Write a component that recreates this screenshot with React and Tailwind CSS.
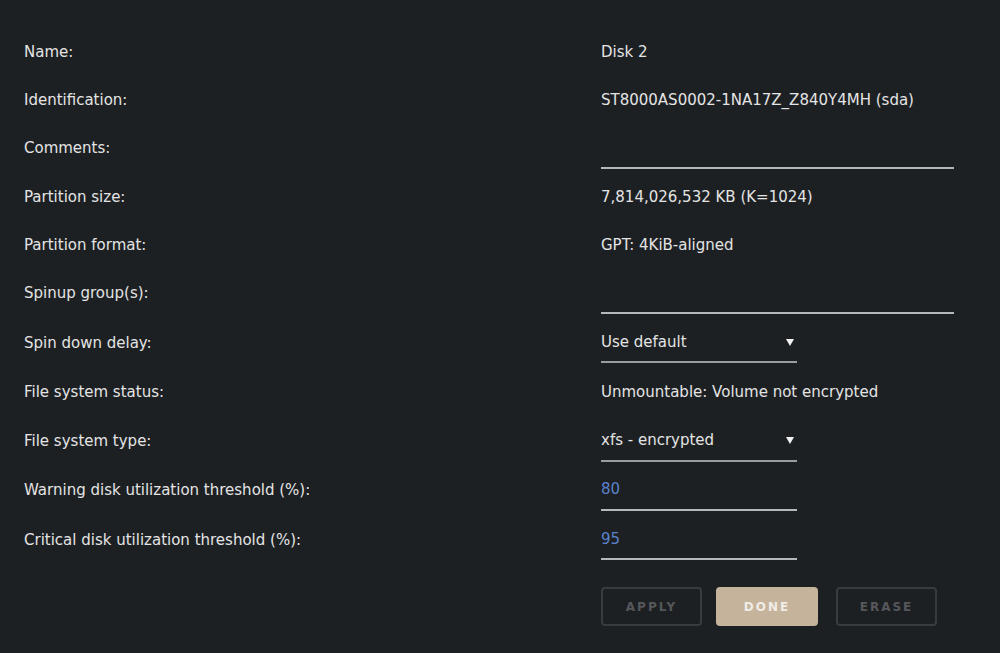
import React from 'react'

const rows = [
  { label: 'Name:', h: 'h-[47px]', type: 'text', value: 'Disk 2' },
  { label: 'Identification:', h: 'h-[48px]', type: 'text', value: 'ST8000AS0002-1NA17Z_Z840Y4MH (sda)' },
  { label: 'Comments:', h: 'h-[49px]', type: 'input', value: '', wide: true },
  { label: 'Partition size:', h: 'h-[49px]', type: 'text', value: '7,814,026,532 KB (K=1024)' },
  { label: 'Partition format:', h: 'h-[47px]', type: 'text', value: 'GPT: 4KiB-aligned' },
  { label: 'Spinup group(s):', h: 'h-[49px]', type: 'input', value: '', wide: true },
  { label: 'Spin down delay:', h: 'h-[50px]', type: 'select', value: 'Use default' },
  { label: 'File system status:', h: 'h-[49px]', type: 'text', value: 'Unmountable: Volume not encrypted' },
  { label: 'File system type:', h: 'h-[49px]', type: 'select', value: 'xfs - encrypted' },
  { label: 'Warning disk utilization threshold (%):', h: 'h-[49px]', type: 'number', value: '80' },
  { label: 'Critical disk utilization threshold (%):', h: 'h-[50px]', type: 'number', value: '95' },
]

function Field({ row }) {
  if (row.type === 'text') return <span>{row.value}</span>
  if (row.type === 'select') {
    return (
      <div className="flex h-[40px] w-[196px] items-center justify-between border-b-2 border-[#9a9c9e] pr-[2px]">
        <span>{row.value}</span>
        <svg width="8" height="7" viewBox="0 0 8 7" className="mr-[1px]">
          <path d="M0 0 H8 L4 7 Z" fill="#f2f2f2" />
        </svg>
      </div>
    )
  }
  return (
    <div
      className={`flex h-[40px] items-center border-b-2 border-[#b5b7b9] ${row.wide ? 'w-[353px]' : 'w-[196px]'} ${row.type === 'number' ? 'text-[#5a80cc]' : ''}`}
    >
      {row.value}
    </div>
  )
}

export default function App() {
  return (
    <div
      className="min-h-[653px] w-full bg-[#1d2023] pt-[29px] text-[15px] text-[#e4e4e4]"
      style={{ fontFamily: '"DejaVu Sans", sans-serif' }}
    >
      {rows.map((row) => (
        <div key={row.label} className={`flex items-center ${row.h}`}>
          <div className="w-[601px] pl-[24px]">{row.label}</div>
          <Field row={row} />
        </div>
      ))}
      <div className="mt-[22px] flex gap-[14px] pl-[601px]">
        <button className="h-[39px] w-[101px] rounded-[4px] border-2 border-[#393b3e] text-[12px] font-bold tracking-[2px] text-[#55575a]">
          APPLY
        </button>
        <button className="h-[39px] w-[102px] rounded-[4px] bg-[#c6b39b] text-[12px] font-bold tracking-[2px] text-[#f0ede8]">
          DONE
        </button>
        <button className="ml-[4px] h-[39px] w-[101px] rounded-[4px] border-2 border-[#393b3e] text-[12px] font-bold tracking-[2px] text-[#55575a]">
          ERASE
        </button>
      </div>
    </div>
  )
}
